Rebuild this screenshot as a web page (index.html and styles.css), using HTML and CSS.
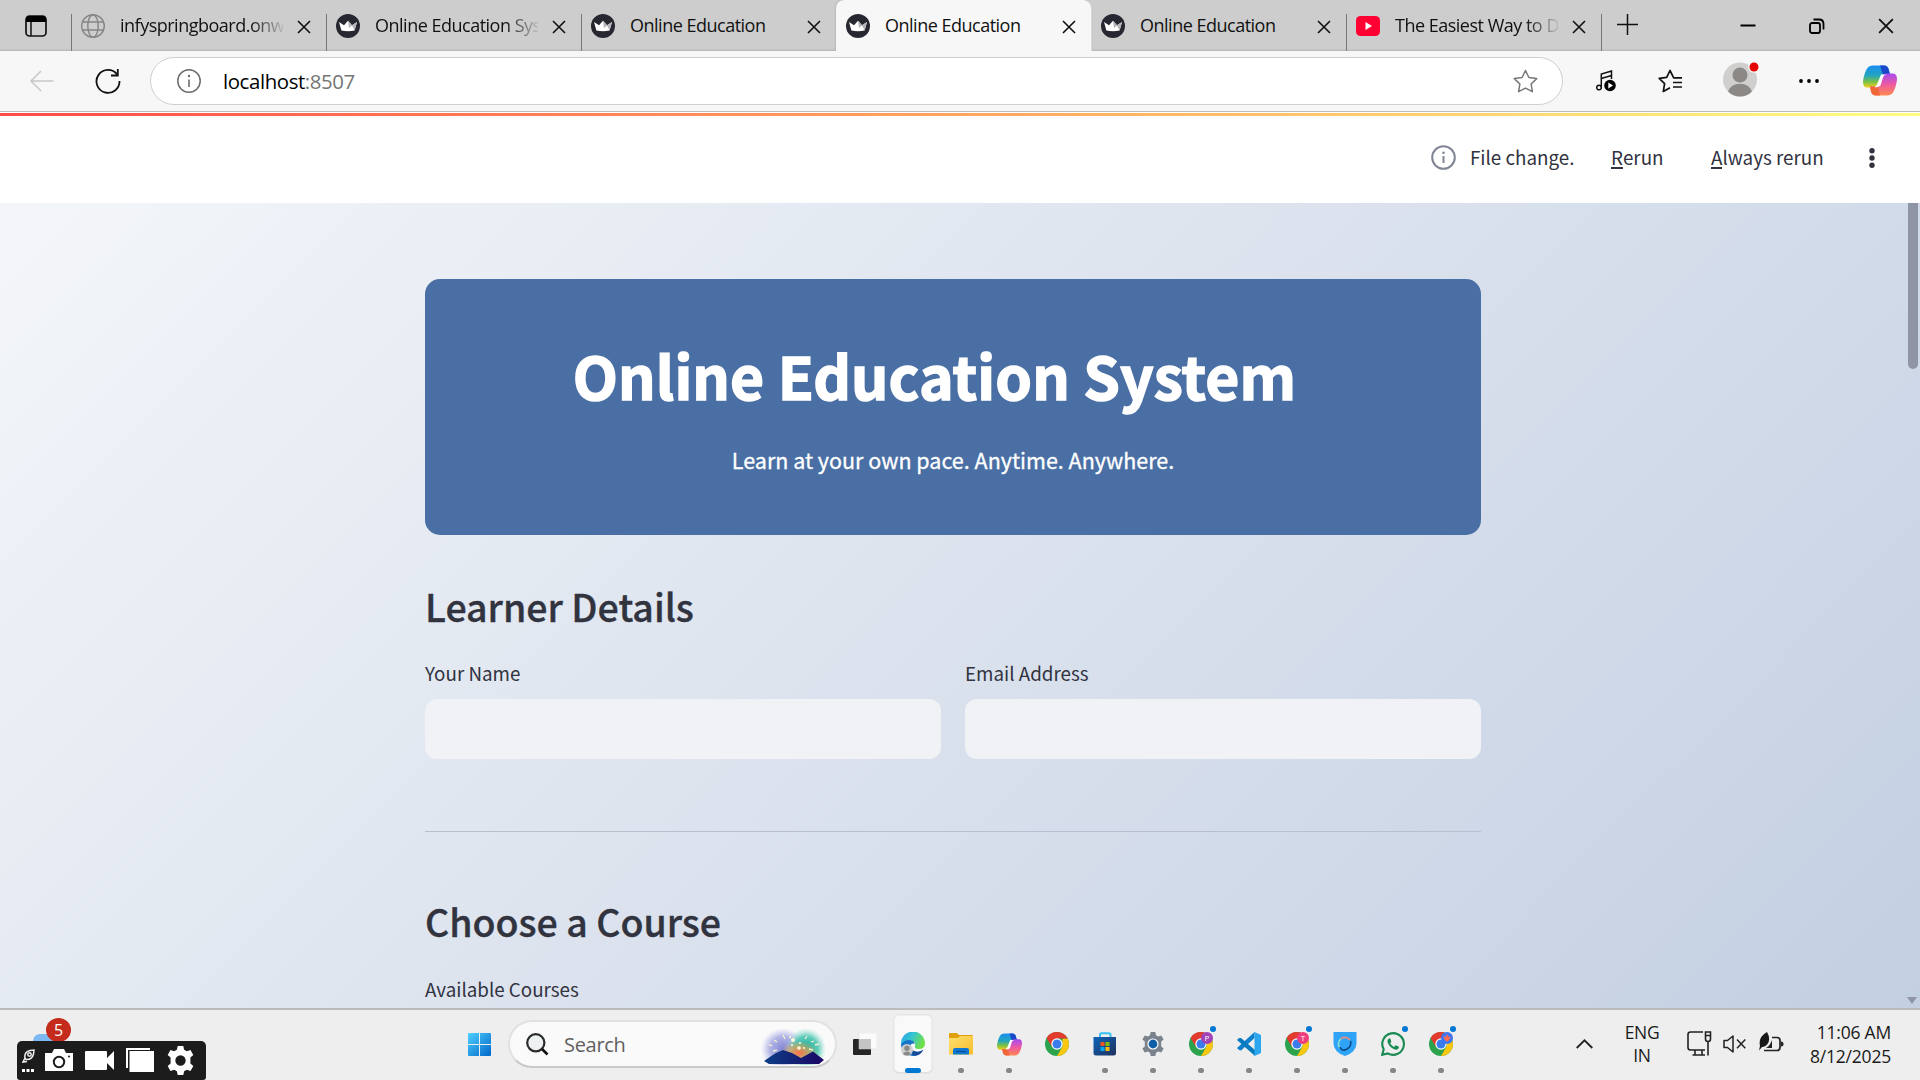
FILE: index.html
```html
<!DOCTYPE html>
<html lang="en">
<head>
<meta charset="utf-8">
<title>Online Education System</title>
<link rel="stylesheet" href="styles.css">
</head>
<body>
<svg class="defs" aria-hidden="true">
  <defs>
    <linearGradient id="win" x1="0" y1="0" x2="1" y2="1"><stop offset="0" stop-color="#4fd0ff"/><stop offset="1" stop-color="#0067c7"/></linearGradient>
    <linearGradient id="cpA" x1="0" y1="0" x2="0" y2="1"><stop offset="0" stop-color="#1b8df0"/><stop offset=".45" stop-color="#22a6c0"/><stop offset=".75" stop-color="#7cc242"/><stop offset="1" stop-color="#f2d01c"/></linearGradient>
    <linearGradient id="cpB" x1="0" y1="0" x2="0" y2="1"><stop offset="0" stop-color="#a64af0"/><stop offset=".5" stop-color="#ee5aa0"/><stop offset="1" stop-color="#ff8a50"/></linearGradient>
    <linearGradient id="edgeA" x1="0" y1="0" x2="1" y2=".4"><stop offset="0" stop-color="#2a9fe8"/><stop offset=".5" stop-color="#35c5d0"/><stop offset="1" stop-color="#6fe04a"/></linearGradient>
    <linearGradient id="fold" x1="0" y1="0" x2="1" y2="1"><stop offset="0" stop-color="#ffdf70"/><stop offset="1" stop-color="#f9bd2b"/></linearGradient>
    <linearGradient id="store" x1="0" y1="0" x2="1" y2="1"><stop offset="0" stop-color="#0c64b8"/><stop offset="1" stop-color="#20305c"/></linearGradient>
    <linearGradient id="mount" x1="0" y1="0" x2="1" y2="0"><stop offset="0" stop-color="#0d3f85"/><stop offset="1" stop-color="#1c0566"/></linearGradient>
    <radialGradient id="skyA"><stop offset="0" stop-color="#7f84d6"/><stop offset=".6" stop-color="#9fa3df" stop-opacity=".8"/><stop offset="1" stop-color="#b4b6ea" stop-opacity="0"/></radialGradient>
    <radialGradient id="skyB"><stop offset="0" stop-color="#10a89c"/><stop offset=".6" stop-color="#43c3ae" stop-opacity=".85"/><stop offset="1" stop-color="#8cdccb" stop-opacity="0"/></radialGradient>
    <radialGradient id="glow"><stop offset="0" stop-color="#ff7048"/><stop offset=".5" stop-color="#d9a560" stop-opacity=".8"/><stop offset="1" stop-color="#d9b060" stop-opacity="0"/></radialGradient>
    <symbol id="x" viewBox="0 0 14 14"><path d="M1 1L13 13M13 1L1 13" fill="none" stroke="#111" stroke-width="1.6"/></symbol>
    <symbol id="crown" viewBox="0 0 24 24"><circle cx="12" cy="12" r="12" fill="#262730"/><path d="M3 8L8 11.3 12 6.7 16 11.3 21 8 18.6 16.5Q12 18 5.4 16.5Z" fill="#fff"/><path d="M12 6.7L16 11.3 21 8 18.6 16.5 16 11.5 13 14Z" fill="#b4b4b8"/></symbol>
    <symbol id="copilot" viewBox="0 0 34 30"><path d="M10 0H21Q25 0 26 5L27 9H22Q18 9 17 13L14 20Q13 22 10 22H4Q0 22 0 16Q1 8 4 3Q6 0 10 0Z" fill="url(#cpA)"/><path d="M17 0H21Q25 0 26 5L27 9H20Z" fill="#1b48c8"/><path d="M24 30H13Q9 30 8 26L7 21H12Q16 21 17 17L20 10Q21 8 24 8H30Q34 8 34 14Q33 22 30 27Q28 30 24 30Z" fill="url(#cpB)"/><path d="M17 30H13Q9 30 8 26L7 21H15Z" fill="#f0683a"/><path d="M18 9H24Q21 9 20 12L17.500 20Q16 21.800 11.500 21.800Q14 20 14.800 17Z" fill="#fff"/></symbol>
    <symbol id="chrome" viewBox="0 0 24 24"><circle cx="12" cy="12" r="12" fill="#2ba24c"/><path d="M12 24L17.500 14.500V6.500H22.600A12 12 0 0 1 12 24Z" fill="#fdc711"/><path d="M12 12L6.700 14.500 1.600 6A12 12 0 0 1 22.600 6.500H12Z" fill="#e33b2e"/><circle cx="12" cy="12" r="5.700" fill="#fff"/><circle cx="12" cy="12" r="4.500" fill="#3a7cec"/></symbol>
    <symbol id="gear" viewBox="0 0 24 24"><path fill-rule="evenodd" d="M9.700 0h4.600l.7 3.200 2.200 1.200 3.100-1L22.600 7.400 20.200 9.600v4.800l2.400 2.200-2.300 4-3.100-1-2.200 1.200-.7 3.200H9.700L9 20.800l-2.200-1.200-3.100 1-2.300-4 2.400-2.200V9.600L1.400 7.400l2.300-4 3.100 1L9 3.200ZM12 7.700a4.300 4.300 0 1 0 0 8.600 4.300 4.300 0 1 0 0-8.600Z"/></symbol>
  </defs>
</svg>

<div class="screen">
  <header class="tabstrip">
    <div class="workspace"><svg width="22" height="22" viewBox="0 0 22 22"><rect x="1" y="1" width="20" height="20" rx="3.500" fill="none" stroke="#111" stroke-width="1.700"/><path d="M1 7V4Q1 1 4 1H18Q21 1 21 4V7Z"/><path d="M6 7V21" stroke="#111" stroke-width="1.500"/></svg></div>
    <div class="tab sep"><svg class="fav" viewBox="0 0 24 24" fill="none" stroke="#858585" stroke-width="1.400"><circle cx="12" cy="12" r="11.300"/><ellipse cx="12" cy="12" rx="5.200" ry="11.300"/><path d="M1.500 8H22.500M1.500 16H22.500"/></svg><span class="label fade">infyspringboard.onwing</span><svg class="close"><use href="#x"/></svg></div>
    <div class="tab sep"><svg class="fav"><use href="#crown"/></svg><span class="label fade">Online Education System</span><svg class="close"><use href="#x"/></svg></div>
    <div class="tab sep"><svg class="fav"><use href="#crown"/></svg><span class="label">Online Education</span><svg class="close"><use href="#x"/></svg></div>
    <div class="tab active"><svg class="fav"><use href="#crown"/></svg><span class="label">Online Education</span><svg class="close"><use href="#x"/></svg></div>
    <div class="tab"><svg class="fav"><use href="#crown"/></svg><span class="label">Online Education</span><svg class="close"><use href="#x"/></svg></div>
    <div class="tab sep"><svg class="fav" viewBox="0 0 24 24"><rect y="2" width="24" height="20" rx="4.500" fill="#ff0033"/><path d="M9.500 8V16L16 12Z" fill="#fff"/></svg><span class="label fade">The Easiest Way to Do It</span><svg class="close"><use href="#x"/></svg></div>
    <div class="newtab"><svg width="21" height="21" viewBox="0 0 21 21"><path d="M10.500 0V21M0 10.500H21" stroke="#111" stroke-width="1.500"/></svg></div>
    <div class="winctl">
      <svg width="16" height="16" viewBox="0 0 16 16"><path d="M.5 7.500H15.500" stroke="#000" stroke-width="2"/></svg>
      <svg width="16" height="16" viewBox="0 0 16 16" fill="none" stroke="#000" stroke-width="1.800"><rect x="1" y="5" width="10" height="10" rx="2"/><path d="M4.500 1.500H10Q14.500 1.500 14.500 6V11.500"/></svg>
      <svg width="16" height="16"><use href="#x"/></svg>
    </div>
  </header>

  <div class="toolbar">
    <svg class="back" width="25" height="22" viewBox="0 0 25 22" fill="none" stroke="#c8c8c8" stroke-width="1.600"><path d="M12 1L2 11 12 21M2 11H24.500"/></svg>
    <svg class="reload" width="26" height="26" viewBox="0 0 26 26" fill="none" stroke="#111" stroke-width="1.800"><path d="M24.500 13A11.500 11.500 0 1 1 22.200 6.500M22.800 1V7.500H16"/></svg>
    <div class="address">
      <svg width="24" height="24" viewBox="0 0 24 24"><circle cx="12" cy="12" r="11.200" fill="none" stroke="#6b6b6b" stroke-width="1.500"/><path d="M12 10.500V18" stroke="#6b6b6b" stroke-width="1.600"/><circle cx="12" cy="7" r="1.200" fill="#6b6b6b"/></svg>
      <span class="host">localhost<span class="port">:8507</span></span>
      <svg class="star" width="25" height="24" viewBox="0 0 25 24"><path d="M12.500 1.500L15.900 8.500 23.700 9.600 18.100 15 19.400 22.700 12.500 19.100 5.600 22.700 6.900 15 1.300 9.600 9.100 8.500Z" fill="none" stroke="#777" stroke-width="1.500" stroke-linejoin="round"/></svg>
    </div>
    <div class="tools">
      <svg class="t-music" width="21" height="22" viewBox="0 0 21 22" fill="none" stroke="#111" stroke-width="1.500"><circle cx="3" cy="17.500" r="2.300"/><path d="M5.300 17.500V4L15.500 1V9M5.300 8.500L15.500 5.500"/><circle cx="14" cy="15.500" r="5.800" fill="#000" stroke="none"/><path d="M12.300 12.600V18.400L17 15.500Z" fill="#fff" stroke="none"/></svg>
      <svg class="t-fav" width="25" height="24" viewBox="0 0 25 24" fill="none" stroke="#111" stroke-width="1.700" stroke-linejoin="round"><path d="M24 8.800H15.700L12 1.500 8.700 8.300 1.200 9.400 6.600 14.700 5.300 22.500 12 18.800M15 13.500H24M15 18H24"/></svg>
      <svg class="t-user" width="38" height="36" viewBox="0 0 38 36"><circle cx="17" cy="18.500" r="17" fill="#d0cfcd"/><circle cx="17" cy="14" r="7.500" fill="#8b8885"/><path d="M5 30.500Q8 22.800 17 22.800T29 30.500Q24 35.500 17 35.500T5 30.500Z" fill="#8b8885"/><circle cx="31" cy="6" r="5.800" fill="#f7f7f7"/><circle cx="31" cy="6" r="4.500" fill="#e60000"/></svg>
      <svg class="t-more" width="20" height="4" viewBox="0 0 20 4"><circle cx="2" cy="2" r="1.900"/><circle cx="10" cy="2" r="1.900"/><circle cx="18" cy="2" r="1.900"/></svg>
      <svg class="t-copilot" width="34" height="31"><use href="#copilot"/></svg>
    </div>
  </div>

  <main class="app">
    <div class="progress"></div>
    <div class="apphead">
      <svg width="25" height="25" viewBox="0 0 25 25"><circle cx="12.500" cy="12.500" r="11.300" fill="none" stroke="#808495" stroke-width="2"/><path d="M12.500 11V18" stroke="#808495" stroke-width="2"/><circle cx="12.500" cy="7.700" r="1.300" fill="#808495"/></svg>
      <span class="msg">File change.</span>
      <span class="action rerun"><u>R</u>erun</span>
      <span class="action always"><u>A</u>lways rerun</span>
      <svg class="kebab" width="6" height="20" viewBox="0 0 6 20" fill="#31333f"><circle cx="3" cy="2.700" r="2.700"/><circle cx="3" cy="10" r="2.700"/><circle cx="3" cy="17.300" r="2.700"/></svg>
    </div>
    <div class="content">
      <section class="banner">
        <h1>Online Education System</h1>
        <p>Learn at your own pace. Anytime. Anywhere.</p>
      </section>
      <h2>Learner Details</h2>
      <div class="fields">
        <div class="field"><span class="lab">Your Name</span><div class="input"></div></div>
        <div class="field"><span class="lab">Email Address</span><div class="input"></div></div>
      </div>
      <div class="rule"></div>
      <h2 class="second">Choose a Course</h2>
      <span class="lab l-course">Available Courses</span>
    </div>
    <div class="scrollbar"></div>
    <div class="scrolldown"></div>
  </main>

  <footer class="taskbar">
    <svg class="start" width="23" height="23" viewBox="0 0 23 23"><rect width="23" height="23" rx="1" fill="url(#win)"/><path d="M11.500 0V23M0 11.500H23" stroke="#eee" stroke-width="1"/></svg>
    <div class="search">
      <svg width="23" height="23" viewBox="0 0 23 23"><circle cx="9.800" cy="9.800" r="8.600" fill="#eef1f2" stroke="#2b2b2b" stroke-width="2.200"/><path d="M16 16L21.500 21.500" stroke="#111" stroke-width="2.600"/></svg>
      <span>Search</span>
      <svg class="art" width="65" height="37" viewBox="0 0 65 37"><ellipse cx="22" cy="21" rx="22" ry="21" fill="url(#skyA)"/><ellipse cx="45" cy="21" rx="20" ry="21" fill="url(#skyB)"/><ellipse cx="38" cy="25" rx="19" ry="12" fill="url(#glow)"/><path d="M3 33L14 25.500 22 22 31 25 40 30 52 23.500 63 32 58 36H8Z" fill="url(#mount)"/><g stroke="#f8f1d0" stroke-width="1.300"><path d="M8 17l3 .6M13 12l3 2M22 7l2 4M12 23l4-.8M44 11l2-3M50 14l3-1M54 17l4-1M48 21l4 1"/></g><g fill="#fff9d8"><circle cx="32" cy="12" r="2"/><circle cx="29" cy="9" r="1"/><circle cx="38" cy="20" r="1.800"/><circle cx="39" cy="15" r="1"/><circle cx="43" cy="20" r="1"/><circle cx="31" cy="17" r="1"/></g></svg>
    </div>
    <div class="apps">
      <div class="slot"><svg width="24" height="23" viewBox="0 0 24 23"><rect y="6" width="18" height="16" rx="1" fill="#262626"/><path d="M6 0H23Q24 0 24 1V15Q24 16 23 16H6Z" fill="#fbfbfb" stroke="#ddd" stroke-width=".5"/><path d="M6 6H18V16H6Z" fill="#c4c4c4"/></svg></div>
      <div class="slot current"><svg width="24" height="24" viewBox="0 0 24 24"><path d="M0 12A12 12 0 0 1 24 11Q24 17 18 17 13 17 14 14 15 10 10 8.500 4 7.500 0 14Z" fill="url(#edgeA)"/><path d="M0 12.500Q3 7.500 9 8 13.500 8.700 13.500 12 10 10.500 9.500 14 9.500 20 14 23.800A12 12 0 0 1 0 12.500Z" fill="#1674c8"/><path d="M9.500 13.500Q9.800 18 14 19.300 19 20.500 22.500 17.500 20 23 14 24 8 22 9.500 13.500Z" fill="#124a99"/><circle cx="6" cy="18" r="6" fill="#cfcfcf"/><circle cx="6" cy="16.300" r="2.700" fill="#888"/><path d="M2 22Q3 19.500 6 19.500T10 22Q6 25 2 22Z" fill="#888"/></svg><i class="run"></i></div>
      <div class="slot"><svg width="24" height="24" viewBox="0 0 24 24"><path d="M0 2Q0 1 1 1H8L10 3H23Q24 3 24 4V8H0Z" fill="#dfa00b"/><path d="M0 6H9L11 4H24V22.500H0Z" fill="url(#fold)"/><path d="M4 22.500V18Q4 16 6 16H18Q20 16 20 18V22.500Z" fill="#1176cf"/><path d="M7 19.500H17" stroke="#064a91"/></svg><i class="dot"></i></div>
      <div class="slot"><svg width="25" height="23"><use href="#copilot"/></svg><i class="dot"></i></div>
      <div class="slot"><svg width="24" height="24"><use href="#chrome"/></svg></div>
      <div class="slot"><svg width="24" height="24" viewBox="0 0 24 24"><path d="M7 6V3Q7 1.200 8.500 1.200H16Q17.500 1.200 17.500 3V6" fill="none" stroke="#35c1f1" stroke-width="2"/><path d="M.5 5H23V21Q23 23.500 20.500 23.500H3Q.5 23.500 .5 21Z" fill="url(#store)"/><path d="M7.500 10H11.500V14H7.500Z" fill="#f35325"/><path d="M12.500 10H16.500V14H12.500Z" fill="#81bc06"/><path d="M7.500 15H11.500V19H7.500Z" fill="#05a6f0"/><path d="M12.500 15H16.500V19H12.500Z" fill="#ffba08"/></svg><i class="dot"></i></div>
      <div class="slot"><svg width="24" height="24" fill="#7a838c"><use href="#gear"/><circle cx="12" cy="12" r="5.600" fill="#fff"/><circle cx="12" cy="12" r="4.400" fill="#105ea8"/></svg><i class="dot"></i></div>
      <div class="slot"><svg width="24" height="24"><use href="#chrome"/></svg><b class="pf purple">P</b><i class="note"></i><i class="dot"></i></div>
      <div class="slot"><svg width="24" height="24" viewBox="0 0 24 24"><path d="M17.500 0V6L4 18.500 2 18 0 16Z" fill="#0f80cc"/><path d="M0 8L2 6 4 6 18 18V24Z" fill="#087bbf"/><path d="M17.500 0L24 3V21L17.500 24Z" fill="#2ba6ef"/></svg><i class="dot"></i></div>
      <div class="slot"><svg width="24" height="24"><use href="#chrome"/></svg><b class="pf pink">T</b><i class="note"></i><i class="dot"></i></div>
      <div class="slot"><svg width="24" height="24" viewBox="0 0 24 24"><path d="M.5 0H23.500V11Q23.500 20 12 24 .5 20 .5 11Z" fill="#2ea3f7"/><path d="M7 16A6 6 0 0 1 8 7" fill="none" stroke="#87e0d0" stroke-width="1.600"/><path d="M8 6.500Q13 3.500 17 8" fill="none" stroke="#ef8b7e" stroke-width="1.600"/><path d="M17.500 9Q19 14 14 17T7 15" fill="none" stroke="#0c4a8a" stroke-width="1.600"/></svg><i class="dot"></i></div>
      <div class="slot"><svg width="24" height="24" viewBox="0 0 24 24"><path d="M1.200 22.800L2.700 17.300A10.800 10.800 0 1 1 6.800 21.400Z" fill="none" stroke="#1a8a53" stroke-width="2.100"/><path d="M8.300 6.200Q6 7.500 6.500 10 8.500 16 14.500 17.700 17.500 18 18 14.800L14.700 13.200 13 15Q10.200 13.500 9.200 11.200L10.400 9.800 9.300 6.500Z" fill="#1a8a53"/></svg><i class="note"></i><i class="dot"></i></div>
      <div class="slot"><svg width="24" height="24"><use href="#chrome"/></svg><b class="pf blue"><svg width="8" height="8" viewBox="0 0 8 8"><path d="M4 0L5.500 3 8 2.500 6 6 4 8 2 6 0 2.500 2.500 3Z" fill="#ff6b52"/></svg></b><i class="note"></i><i class="dot"></i></div>
    </div>
    <div class="tray">
      <svg class="caret" width="17" height="10" viewBox="0 0 17 10" fill="none" stroke="#222" stroke-width="1.800"><path d="M.7 9L8.500 1.300 16.300 9"/></svg>
      <div class="lang"><span>ENG</span><span>IN</span></div>
      <svg class="net" width="25" height="25" viewBox="0 0 25 25" fill="none" stroke="#222" stroke-width="1.600"><path d="M16 1H3.500Q1 1 1 3.500V16.500Q1 19 3.500 19H18M8 19V23.500M15 19V23.500M5.500 24H18M21 10.500V24.500"/><path d="M18.500 1H23.500V8Q23.500 10.500 21 10.500T18.500 8ZM18.500 4.500H23.500"/></svg>
      <svg class="vol" width="23" height="18" viewBox="0 0 23 18" fill="none" stroke="#222" stroke-width="1.500"><path d="M1 5.500H4.500L10 1V17L4.500 12.500H1ZM14 4.500L22.300 13.200M22.300 4.500L14 13.200" stroke-linejoin="round"/></svg>
      <svg class="bat" width="25" height="21" viewBox="0 0 25 21"><path d="M13 5.500H18Q21 5.500 21 8.500V15Q21 18.500 18 18.500H5" fill="none" stroke="#222" stroke-width="1.700"/><path d="M22 9.500Q24.500 9.500 24.500 12T22 14.500Z" fill="#222"/><path d="M1 14Q-1 5 8 0Q12 7 8.500 12 6 15.500 3 15L0 18.500Z" fill="#181818"/><path d="M7 16Q11.500 13 13 8V16Z" fill="#222"/></svg>
      <div class="clock"><span>11:06 AM</span><span>8/12/2025</span></div>
    </div>
  </footer>

  <div class="weather"></div>
  <div class="recorder">
    <div class="mini"><svg width="13" height="14" viewBox="0 0 13 14" fill="none" stroke="#eee" stroke-width="1.500"><path d="M3 9Q2 3 8 1.500L12 1 11.500 5Q10 11 4 10.500ZM3 9L1 13 5 12.500"/><circle cx="7.500" cy="5.500" r="1.700"/></svg><svg width="12" height="3" viewBox="0 0 12 3" fill="#fff"><path d="M0 0H3V3H0ZM4.500 0H7.500V3H4.500ZM9 0H12V3H9Z"/></svg></div>
    <svg width="28" height="22" viewBox="0 0 28 22"><path d="M0 4H7L9 0H19L21 4H28V22H0Z" fill="#fff"/><circle cx="14" cy="13" r="5.200" fill="none" stroke="#1c1c1c" stroke-width="2"/><circle cx="24" cy="7.500" r=".9"/></svg>
    <svg width="29" height="19" viewBox="0 0 29 19" fill="#fff"><path d="M1 0H21Q22 0 22 1V7L29 0V19L22 12V18Q22 19 21 19H1Q0 19 0 18V1Q0 0 1 0Z"/></svg>
    <svg width="28" height="24" viewBox="0 0 28 24" fill="#fff"><path d="M0 0H24V2H2V20H0Z"/><rect x="3.500" y="3" width="24.500" height="21"/></svg>
    <svg width="29" height="29" fill="#fff"><use href="#gear"/></svg>
  </div>
  <div class="badge">5</div>
</div>
</body>
</html>
```
FILE: styles.css
```css
* { box-sizing: border-box; }
body { margin: 0; overflow: hidden; font-family: "Open Sans", "Noto Sans", sans-serif; color: #111; }
svg { display: block; flex: none; }
.defs { position: absolute; width: 0; height: 0; }
.screen { width: 1920px; height: 1080px; display: flex; flex-direction: column; position: relative; overflow: hidden; }

/* Tab strip */
.tabstrip { height: 51px; background: #cdcdcd; display: flex; flex: none; box-shadow: inset 0 -2px 2px -1px #b3b3b3; }
.workspace { width: 71px; padding: 15px 0 0 25px; }
.tab { width: 255px; height: 51px; display: flex; align-items: center; padding: 0 0 0 10px; position: relative; }
.tab.sep::before { content: ""; position: absolute; left: 0; top: 14px; width: 1px; height: 37px; background: #777; }
.tab.active { background: #f7f7f7; border-radius: 8px 8px 0 0; box-shadow: 0 0 2px #888, 1px 0 0 #f7f7f7; clip-path: inset(0 -3px 0 -3px); }
.fav { width: 24px; height: 24px; margin: 1px 15px 0 0; }
.label { width: 163px; font-size: 18px; line-height: 24px; letter-spacing: -0.5px; white-space: nowrap; overflow: hidden; margin: -1px 14px 0 0; }
.fade { mask-image: linear-gradient(90deg, #000 80%, transparent 102%); }
.close { width: 14px; height: 14px; margin-top: 2px; }
.newtab { padding: 14px 0 0 16px; width: 90px; position: relative; }
.newtab::before { content: ""; position: absolute; left: 0; top: 14px; width: 1px; height: 37px; background: #777; }
.winctl { margin-left: auto; display: flex; gap: 53px; padding: 18px 26px 0 0; }

/* Address row */
.toolbar { height: 61px; flex: none; background: #f7f7f7; border-bottom: 1px solid #bcbcbc; display: flex; align-items: center; padding: 0 0 1px 29px; }
.reload { margin: 0 29px 0 41px; }
.address { width: 1413px; height: 48px; border: 1.5px solid #cfcfcf; border-radius: 24px; background: #fff; display: flex; align-items: center; padding: 0 24px 0 26px; }
.host { margin: 1px 0 0 22px; font-size: 20.400px; line-height: 30px; letter-spacing: -0.4px; color: #000; }
.port { color: #757575; }
.star { margin-left: auto; }
.tools { display: flex; align-items: center; }
.t-music { margin-left: 33px; }
.t-fav { margin-left: 41px; }
.t-user { margin: -3px 0 0 40px; }
.t-more { margin-left: 38px; }
.t-copilot { margin-left: 44px; }

/* Streamlit page */
.app { height: 896px; flex: none; position: relative; overflow: hidden; background: linear-gradient(135deg, #f5f7fa 0%, #c3cfe2 100%); font-family: "Noto Sans CJK SC", "Noto Sans", sans-serif; color: #31333f; border-top: 1px solid #fff; }
.progress { height: 3px; background: linear-gradient(90deg, #ff4b4b, #ffa55f 50%, #fffd80); }
.apphead { height: 87px; background: #fff; display: flex; align-items: center; padding: 0 0 6px 1431px; font-size: 18.800px; line-height: 28px; white-space: nowrap; }
.apphead svg { margin-top: 2px; }
.msg { width: 103px; margin-left: 14px; }
.action { margin-top: 1px; }
.action u { text-decoration: none; border-bottom: 2px solid #31333f; display: inline-block; line-height: 20px; }
.rerun { margin-left: 38px; width: 51px; }
.always { margin-left: 49px; width: 112px; }
.apphead .kebab { margin: 2px 0 0 46px; }
.content { width: 1056px; margin: 76px 0 0 425px; display: flex; flex-direction: column; }
.banner { height: 256px; border-radius: 15px; background: #4a6fa5; color: #fff; display: flex; flex-direction: column; align-items: center; padding-top: 52px; }
h1 { margin: 0 37px 0 0; font-size: 58.700px; line-height: 88px; font-weight: 700; letter-spacing: 0.1px; -webkit-text-stroke: 1.500px #fff; white-space: nowrap; }
.banner p { margin: 23px 0 0; font-size: 21.500px; line-height: 36px; -webkit-text-stroke: 0.300px #fff; white-space: nowrap; }
h2 { margin: 43px 0 0; font-size: 37.500px; line-height: 56px; font-weight: 500; -webkit-text-stroke: 0.350px #31333f; white-space: nowrap; }
.fields { display: flex; gap: 24px; margin-top: 25px; }
.field { width: 516px; }
.lab { display: block; height: 28px; font-size: 18.800px; line-height: 28px; white-space: nowrap; }
.input { height: 60px; margin-top: 12px; border-radius: 12px; background: #f0f2f6; }
.rule { height: 1px; background: #b9bfce; margin-top: 72px; }
.second { margin-top: 61px; }
.l-course { margin-top: 26px; }
.scrollbar { position: absolute; right: 2px; top: 90px; width: 10px; height: 166px; background: #8f95a5; border-radius: 0 0 5px 5px; }
.scrolldown { position: absolute; right: 3px; bottom: 4px; border: 5px solid transparent; border-top: 7px solid #8f95a5; border-bottom: 0; }

/* Taskbar */
.taskbar { height: 72px; flex: none; background: #eee; border-top: 2px solid #bbb; display: flex; align-items: flex-start; padding-left: 468px; }
.start { margin-top: 23px; }
.search { width: 329px; height: 48px; margin: 10px 0 0 17px; border-radius: 24px; border: 2px solid #e1e1e1; border-bottom-color: #c9c9c9; background: #fafafa; display: flex; align-items: center; padding: 0 9px 0 16px; }
.search span { font-size: 20px; line-height: 28px; color: #606060; margin: 1px 0 0 15px; letter-spacing: -0.3px; }
.art { margin-left: auto; margin-top: 4px; }
.apps { display: flex; padding: 4px 0 0 8px; gap: 8px; }
.slot { width: 40px; height: 60px; display: flex; align-items: center; justify-content: center; position: relative; }
.current { background: #f9f9f9; border-radius: 6px; box-shadow: inset 0 0 0 1.500px #e5e5e5, inset 0 -2px 0 #d8d8d8; }
.dot, .run, .note, .pf { position: absolute; }
.dot { width: 6px; height: 5px; border-radius: 3px; background: #858585; left: 17px; top: 54px; }
.run { width: 16px; height: 5px; border-radius: 3px; background: #0078d4; left: 12px; top: 54px; }
.note { width: 6px; height: 6px; border-radius: 50%; background: #0078d4; right: 5px; top: 12px; }
.pf { width: 12px; height: 12px; border-radius: 50%; right: 8px; top: 18px; color: #fff; font: 8px/12px "Open Sans", sans-serif; display: flex; align-items: center; justify-content: center; }
.purple { background: #a142b8; }
.pink { background: #ee3c7c; }
.blue { background: #3b76f6; }
.tray { margin-left: auto; display: flex; align-items: flex-start; color: #1a1a1a; font-size: 17.500px; line-height: 24px; }
.caret { margin-top: 29px; }
.lang { width: 42px; margin: 11px 0 0 28px; display: flex; flex-direction: column; align-items: center; line-height: 23px; letter-spacing: -0.4px; }
.net { margin: 21px 0 0 24px; }
.vol { margin: 25px 0 0 11px; }
.bat { margin: 22px 0 0 13px; }
.clock { width: 110px; margin: 10px 29px 0 -3px; display: flex; flex-direction: column; text-align: right; letter-spacing: -0.2px; }

/* Screen recorder overlay */
.recorder { position: absolute; left: 17px; top: 1041px; width: 189px; height: 39px; border-radius: 5px 5px 3px 3px; background: #1c1c1c; display: flex; align-items: center; gap: 12px; padding: 0 0 1px 5px; }
.mini { width: 12px; display: flex; flex-direction: column; gap: 6px; margin-right: -1px; }
.weather { position: absolute; left: 33px; top: 1034px; width: 24px; height: 7px; border-radius: 12px 6px 0 0; background: #7db8f2; }
.badge { position: absolute; left: 46px; top: 1018px; width: 25px; height: 24px; border-radius: 50%; background: #c42b1c; color: #fff; font-size: 16px; line-height: 24px; text-align: center; clip-path: inset(0 0 1px 0); }
```
